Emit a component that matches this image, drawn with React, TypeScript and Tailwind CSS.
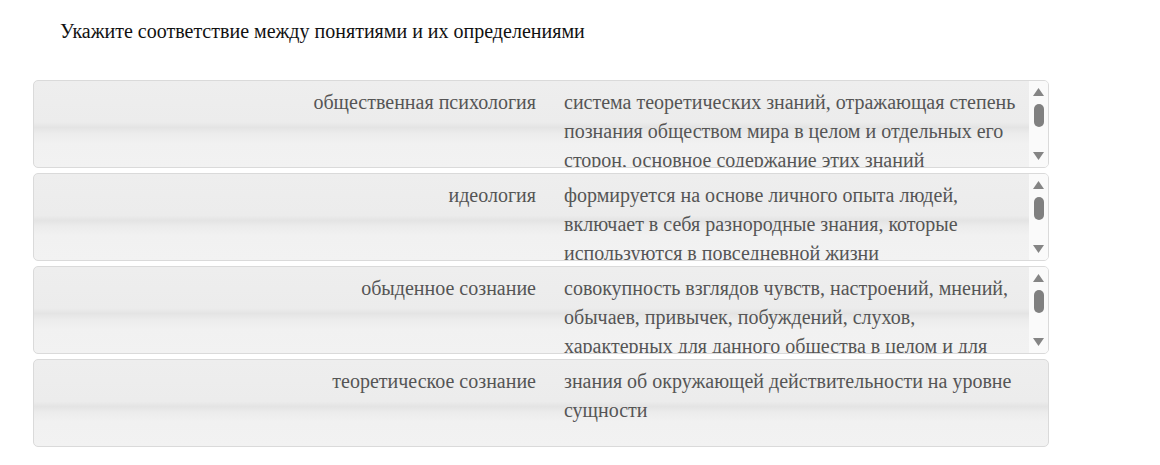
import React from "react";

type Pair = { term: string; definition: string; scroll: boolean };

const pairs: Pair[] = [
  {
    term: "общественная психология",
    definition:
      "система теоретических знаний, отражающая степень познания обществом мира в целом и отдельных его сторон, основное содержание этих знаний составляют научные теории",
    scroll: true,
  },
  {
    term: "идеология",
    definition:
      "формируется на основе личного опыта людей, включает в себя разнородные знания, которые используются в повседневной жизни",
    scroll: true,
  },
  {
    term: "обыденное сознание",
    definition:
      "совокупность взглядов чувств, настроений, мнений, обычаев, привычек, побуждений, слухов, характерных для данного общества в целом и для отдельных социальных групп",
    scroll: true,
  },
  {
    term: "теоретическое сознание",
    definition: "знания об окружающей действительности на уровне сущности",
    scroll: false,
  },
];

function FakeScrollbar() {
  return (
    <div className="w-[19px] shrink-0 bg-[#fafafa] flex flex-col items-center pt-[7px]">
      <svg width="11" height="8" viewBox="0 0 11 8">
        <path d="M5.5 0 L11 8 L0 8 Z" fill="#858585" />
      </svg>
      <div className="mt-[8px] w-[10px] h-[23px] rounded-full bg-[#808080]" />
      <div className="flex-1" />
      <svg width="11" height="8" viewBox="0 0 11 8" className="mb-[7px]">
        <path d="M0 0 L11 0 L5.5 8 Z" fill="#858585" />
      </svg>
    </div>
  );
}

export default function App() {
  return (
    <main className="w-[1160px] h-[465px] bg-white overflow-hidden font-['Liberation_Serif','Times_New_Roman',serif]">
      <h1 className="pl-[60px] pt-[18px] text-[20px] leading-[26px] text-[#111] font-normal">
        Укажите соответствие между понятиями и их определениями
      </h1>

      <div className="ml-[33px] mt-[36px] w-[1016px] flex flex-col gap-[5px]">
        {pairs.map((p) => (
          <div
            key={p.term}
            className="flex h-[88px] border border-[#dadada] rounded-[5px] overflow-hidden bg-[linear-gradient(to_bottom,#eeeeee_0%,#ececec_48%,#e4e4e4_54%,#ececec_61%,#f1f1f1_72%,#f2f2f2_100%)] text-[20px] leading-[29px] text-[#555]"
          >
            <div className="w-[516px] shrink-0 text-right pr-[14px] pt-[7px]">
              {p.term}
            </div>
            <div className="flex-1 overflow-hidden pl-[14px] pr-[7px] pt-[7px]">
              {p.definition}
            </div>
            {p.scroll ? <FakeScrollbar /> : <div className="w-[19px] shrink-0" />}
          </div>
        ))}
      </div>
    </main>
  );
}
